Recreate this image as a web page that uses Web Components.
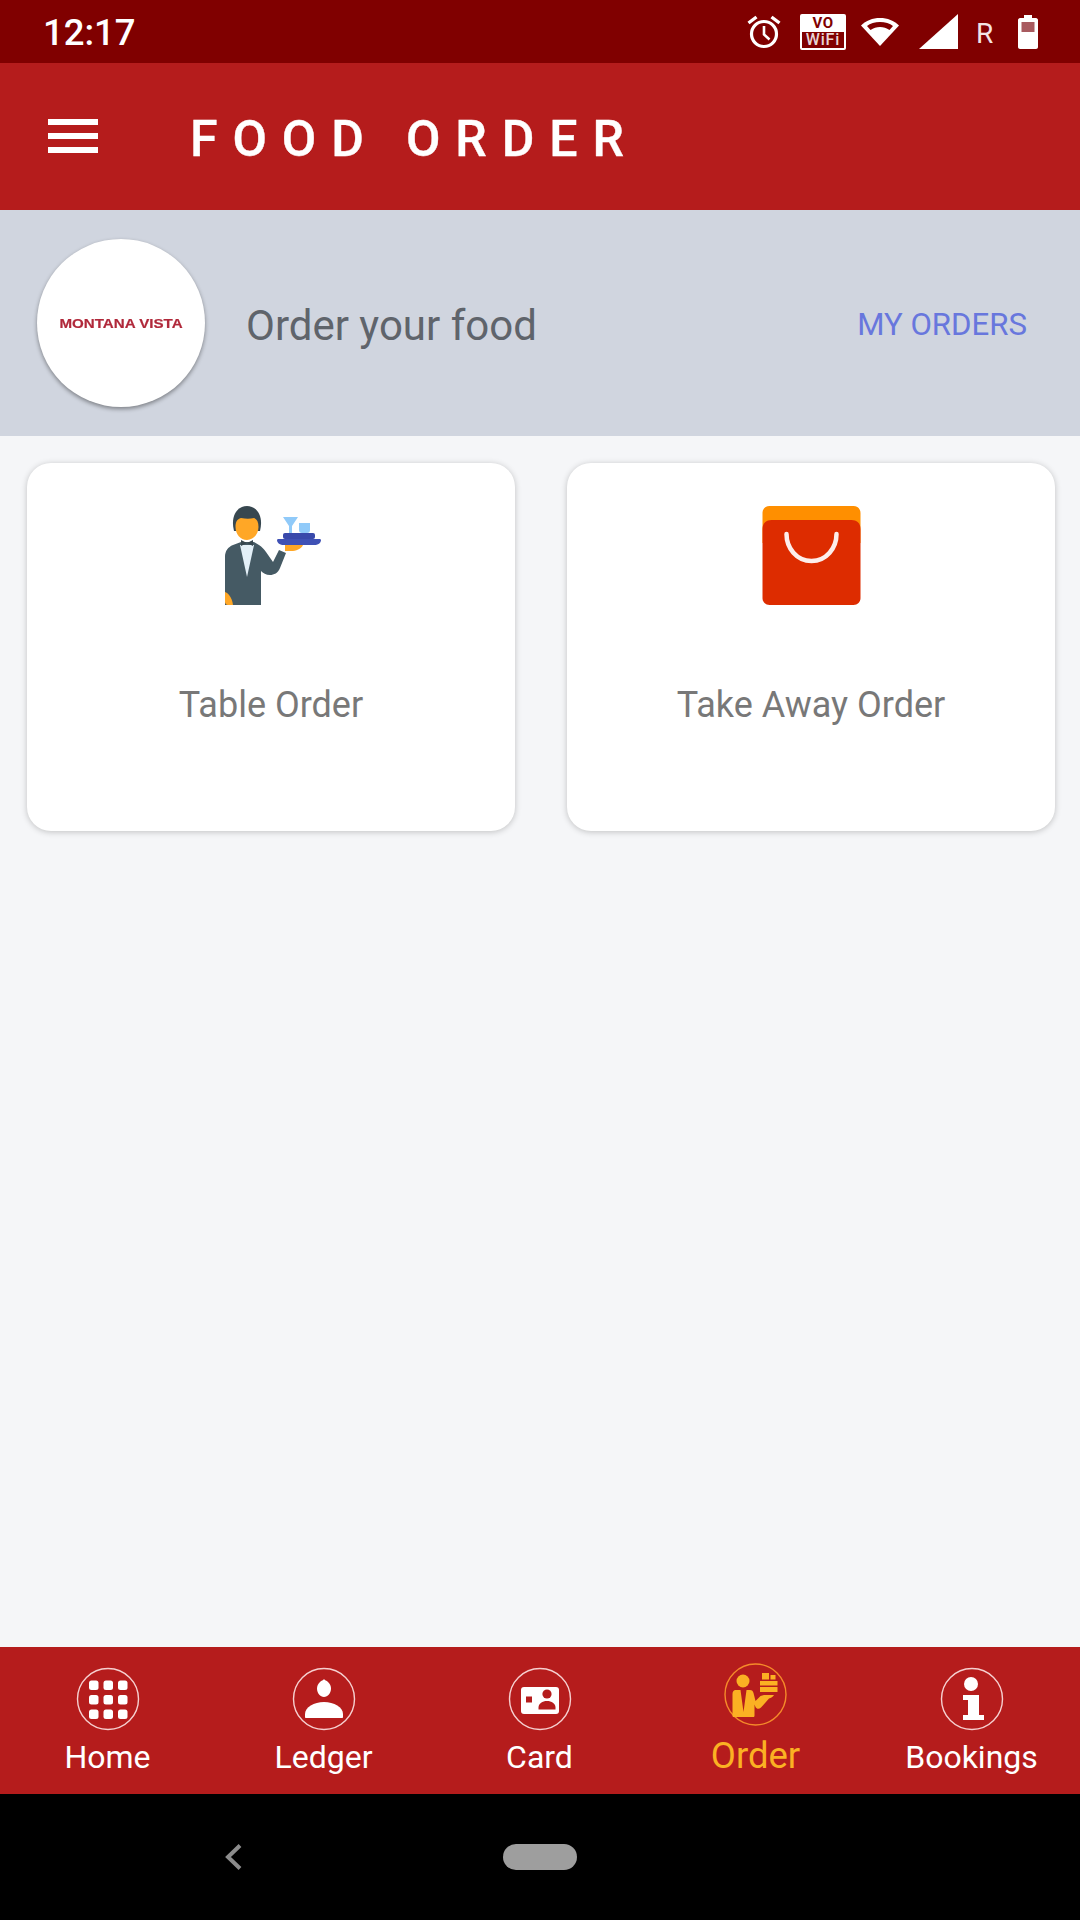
<!DOCTYPE html>
<html>
<head>
<meta charset="utf-8">
<style>
html,body{margin:0;padding:0;background:#f5f6f8}
body{width:1080px;height:1920px;overflow:hidden;font-family:Roboto,"Liberation Sans",sans-serif}
app-screen{height:1920px}
</style>
</head>
<body>
<app-screen>
  <status-bar></status-bar>
  <app-bar>FOOD ORDER</app-bar>
  <order-header></order-header>
  <main-area>
    <option-card label="Table Order" icon="waiter"></option-card>
    <option-card label="Take Away Order" icon="bag"></option-card>
  </main-area>
  <bottom-nav>
    <nav-item label="Home" icon="home"></nav-item>
    <nav-item label="Ledger" icon="ledger"></nav-item>
    <nav-item label="Card" icon="card"></nav-item>
    <nav-item label="Order" icon="order" active></nav-item>
    <nav-item label="Bookings" icon="info"></nav-item>
  </bottom-nav>
  <system-nav></system-nav>
</app-screen>
<script>
const RED='#b51c1c';
const ICONS={
home:`<g fill="#fff">${[12.5,27,41.5].map(y=>[12,26.5,41].map(x=>`<rect x="${x}" y="${y}" width="9.5" height="9.5" rx="2.5"/>`).join('')).join('')}</g>`,
ledger:`<g fill="#fff"><path d="M31 11c1 1.500 2.500 1.500 4 3 2 1.700 3 4 3 6.500 0 4.700-3.200 8.500-7 8.500s-7-3.800-7-8.500c0-2.500 1-4.800 3-6.500 1.500-1.500 3-1.500 4-3z"/><path d="M12 49v-3c0-7 9-12 19-12s19 5 19 12v3c0 .6-.5 1-1 1H13c-.6 0-1-.4-1-1z"/></g>`,
card:`<rect x="12" y="19" width="38" height="27" rx="3" fill="#fff"/><rect x="17" y="28.500" width="6" height="6" fill="${RED}"/><circle cx="38" cy="26" r="4.600" fill="${RED}"/><path d="M29.500 41.500v-2c0-4 4-6.500 8.500-6.500s8.500 2.500 8.500 6.500v2z" fill="${RED}"/>`,
order:`<g fill="#fbb123"><circle cx="19" cy="18" r="6.500"/><path d="M11.500 27h5l3 22 3-22h3.500c2 0 3 1 3.500 3l2 8 5-5 3.500-1h10c-1 2-3 3-5 3.500l-8 9c-2 2-4.500 1.500-5.500-.5l-1-2.500V52.500c0 1-.5 1.500-1.500 1.500H10c-1 0-1.500-.5-1.500-1.500V31c0-2.500 1.500-4 3-4z"/><rect x="38" y="10" width="7" height="6.500"/><rect x="46.500" y="12" width="5" height="4.500"/><rect x="36" y="18" width="17.500" height="4.500"/><rect x="36" y="24" width="17.500" height="5"/></g>`,
info:`<g fill="#fff"><circle cx="30" cy="16" r="7"/><path d="M22 27h16v20h5v5H22v-5h5V32h-5z"/></g>`
};
function def(name,html){
  customElements.define(name,class extends HTMLElement{
    connectedCallback(){
      if(this.shadowRoot)return;
      const s=this.attachShadow({mode:'open'});
      s.innerHTML=typeof html==='function'?html(this):html;
    }
  });
}
def('app-screen',`<style>:host{display:flex;flex-direction:column;width:1080px}</style><slot></slot>`);
def('status-bar',`<style>
:host{display:flex;align-items:center;height:63px;background:#800000;color:#fff;padding:0 42px 0 43px;box-sizing:border-box;flex:none}
.t{font:500 36.500px/63px Roboto,sans-serif;flex:1;margin-top:1px}
.i{display:flex;align-items:center}
svg{display:block;flex:none}
.vo{width:46px;height:36px;background:#fff;border-radius:2px;margin:0 14px 0 19px;display:flex;flex-direction:column;align-items:center;box-sizing:border-box;padding:2px;color:#800000}
.vo b{font:700 15px/14px Roboto,sans-serif;letter-spacing:.5px}
.vo i{font:500 16px/16px Roboto,sans-serif;font-style:normal;background:#800000;color:#e8d4d4;align-self:stretch;text-align:center;margin-top:2px;letter-spacing:.8px}
.r{font:400 28px/28px Roboto,sans-serif;margin:4px 22px 0 18px;width:20px;color:#f3e4e4}
</style>
<div class="t">12:17</div>
<div class="i">
<svg width="34" height="34" viewBox="0 0 34 34"><g fill="none" stroke="#fff"><circle cx="17" cy="19" r="12.500" stroke-width="3.200"/><path d="M17 11v8.500l5.500 5" stroke-width="2.600"/><path d="M9.500 2L1.500 8M24.500 2l8 6" stroke-width="3.400"/></g></svg>
<div class="vo"><b>VO</b><i>WiFi</i></div>
<svg width="40" height="30" viewBox="0 0 40 30" style="margin-right:19px"><path d="M20 29L1 8.500C6 3.500 12.500 1 20 1s14 2.500 19 7.500z" fill="#fff"/><path d="M20 5c-5 0-10 1.500-13 4l3.500 4c3-2 6-3 9.500-3s6.500 1 9.500 3l3.500-4C30 6.500 25 5 20 5z" fill="#800000"/></svg>
<svg width="39" height="35" viewBox="0 0 39 35"><path d="M39 0v35H0z" fill="#fff"/></svg>
<div class="r">R</div>
<svg width="20" height="34" viewBox="0 0 20 34"><path d="M6 0h8v3h4c1 0 2 1 2 2v27c0 1-1 2-2 2H2c-1 0-2-1-2-2V5c0-1 1-2 2-2h4z" fill="#fff"/><rect x="3.500" y="7" width="13" height="10" fill="#a85a5f"/></svg>
</div>`);
def('app-bar',`<style>
:host{display:flex;align-items:center;height:147px;background:${RED};color:#fff;padding:0 0 0 48px;box-sizing:border-box;flex:none;position:relative;z-index:2}
.m{width:50px;height:34px;display:flex;flex-direction:column;justify-content:space-between;margin-right:92px;margin-top:-1px}
.m i{display:block;height:6px;background:#fff}
.t{font:500 50px/60px Roboto,sans-serif;letter-spacing:14.900px;white-space:pre;margin-top:5px;-webkit-text-stroke:.4px #fff}
</style><div class="m"><i></i><i></i><i></i></div><div class="t"><slot></slot></div>`);
def('order-header',`<style>
:host{display:flex;align-items:center;height:226px;background:#d0d5df;box-sizing:border-box;padding:0 53px 0 37px;flex:none}
.c{width:168px;height:168px;border-radius:50%;background:#fff;box-shadow:0 2px 4px rgba(0,0,0,.4);display:flex;align-items:center;justify-content:center;flex:none;margin-top:-1px;margin-right:41px}
.c span{font:700 13.500px/14px "Liberation Sans",sans-serif;color:#b0283a;filter:blur(.7px);white-space:nowrap;-webkit-text-stroke:.2px #b0283a;transform:scaleX(1.120);margin-top:2px}
.o{font:400 42px/48px Roboto,sans-serif;color:#5f646b;flex:1;margin-top:6px}
.m{font:400 31.200px/40px Roboto,sans-serif;color:#6877dd;margin-top:4px}
</style><div class="c"><span>MONTANA VISTA</span></div><div class="o">Order your food</div><div class="m">MY ORDERS</div>`);
def('main-area',`<style>
:host{display:flex;flex:1;gap:52px;padding:27px 25px 0 27px;box-sizing:border-box;align-items:flex-start;background:#f5f6f8}
</style><slot></slot>`);
def('option-card',el=>{
  const waiter=`<svg width="100" height="100" viewBox="0 0 100 100">
<path d="M13 26C9 10 17 1 26 1s17 9 13 25z" fill="#37474f"/>
<path d="M14.500 22c0-5 1.500-8 5.500-9 5 1 9 1 13 0 3 1 4.500 4 4.500 9 0 7-5 13-11.500 13s-11.500-6-11.500-13z" fill="#ffa726"/>
<path d="M4 100V52c0-6 3-10 8-12l8-3h13l5 3c3 2 5 4 7 7l7 10 6-12 7 3-6 15c-2 5-6 7-10 7-4 0-7-2-9-4v34z" fill="#455a64"/>
<path d="M19 40h14l-7 32z" fill="#e3f0f8"/>
<path d="M20 35l6 3 6-3v6l-6-3-6 3z" fill="#37474f"/>
<path d="M4 87c3 1 7 5 8 13H7c-2 0-3-2-3-3z" fill="#ffa726"/>
<path d="M64 40h18c-2 4-7 6-12 6h-6z" fill="#ffa726"/>
<path d="M62 12h15l-6 9v7h-3v-7z" fill="#90caf9"/>
<path d="M78 18h11v7c0 2-1 3-3 3h-5c-2 0-3-1-3-3z" fill="#90caf9"/>
<rect x="62" y="28" width="32" height="6" rx="2" fill="#3949ab"/>
<path d="M56 35c0-1 1-1 2-1h40c1 0 2 0 2 1 0 3-3 5-7 5H63c-4 0-7-2-7-5z" fill="#3f51b5"/>
</svg>`;
  const bag=`<svg width="100" height="100" viewBox="-0.500 0 100 100">
<path d="M1 8c0-4 3-7 7-7h84c4 0 7 3 7 7v30H1z" fill="#ff8f00"/>
<path d="M1 24c0-6 4-9 9-9h80c5 0 9 3 9 9v69c0 4-3 7-7 7H8c-4 0-7-3-7-7z" fill="#dd2c00"/>
<path d="M25 29c0 14 10 27 25 27s25-13 25-27" fill="none" stroke="#fff" stroke-width="4.500" stroke-linecap="round" opacity=".92"/>
</svg>`;
  return `<style>
:host{display:flex;flex-direction:column;align-items:center;width:488px;height:368px;background:#fff;border-radius:24px;box-shadow:0 1px 6px rgba(0,0,0,.22);box-sizing:border-box;padding-top:42px;flex:none}
svg{display:block}
.l{font:400 36px/44px Roboto,sans-serif;color:#787878;margin-top:78px}
</style>${el.getAttribute('icon')==='waiter'?waiter:bag}<div class="l">${el.getAttribute('label')}</div>`;
});
def('bottom-nav',`<style>
:host{display:flex;height:147px;background:${RED};flex:none}
::slotted(*){flex:1}
</style><slot></slot>`);
def('nav-item',el=>{
  const a=el.hasAttribute('active');
  const ic=el.getAttribute('icon');
  return `<style>
:host{display:flex;flex-direction:column;align-items:center;box-sizing:border-box;padding:${a?16:21}px 1px 0 0}
svg{display:block;overflow:visible}
.l{font:400 ${a?36.5:32}px/40px Roboto,sans-serif;color:${a?'#fbb123':'#fff'};margin-top:${a?10:7}px;white-space:nowrap}
</style><svg width="${a?63:62}" height="${a?63:62}" viewBox="0 0 ${a?63:62} ${a?63:62}"><circle cx="${a?31.5:31}" cy="${a?31.5:31}" r="${a?30.5:30.5}" fill="none" stroke="${a?'#f58a2a':'#f6cfcf'}" stroke-width="1.400"/>${ICONS[ic]}</svg><div class="l">${el.getAttribute('label')}</div>`;
});
def('system-nav',`<style>
:host{display:flex;align-items:flex-start;height:126px;background:#000;flex:none;padding:50px 0 0 223px;box-sizing:border-box}
svg{display:block}
.p{width:74px;height:26px;border-radius:13px;background:#9e9e9e;margin-left:259px}
</style><svg width="21" height="26" viewBox="0 0 21 26"><path d="M17 1.500L5 13l12 11.500" fill="none" stroke="#8c8c8c" stroke-width="4"/></svg><div class="p"></div>`);
</script>
</body>
</html>
